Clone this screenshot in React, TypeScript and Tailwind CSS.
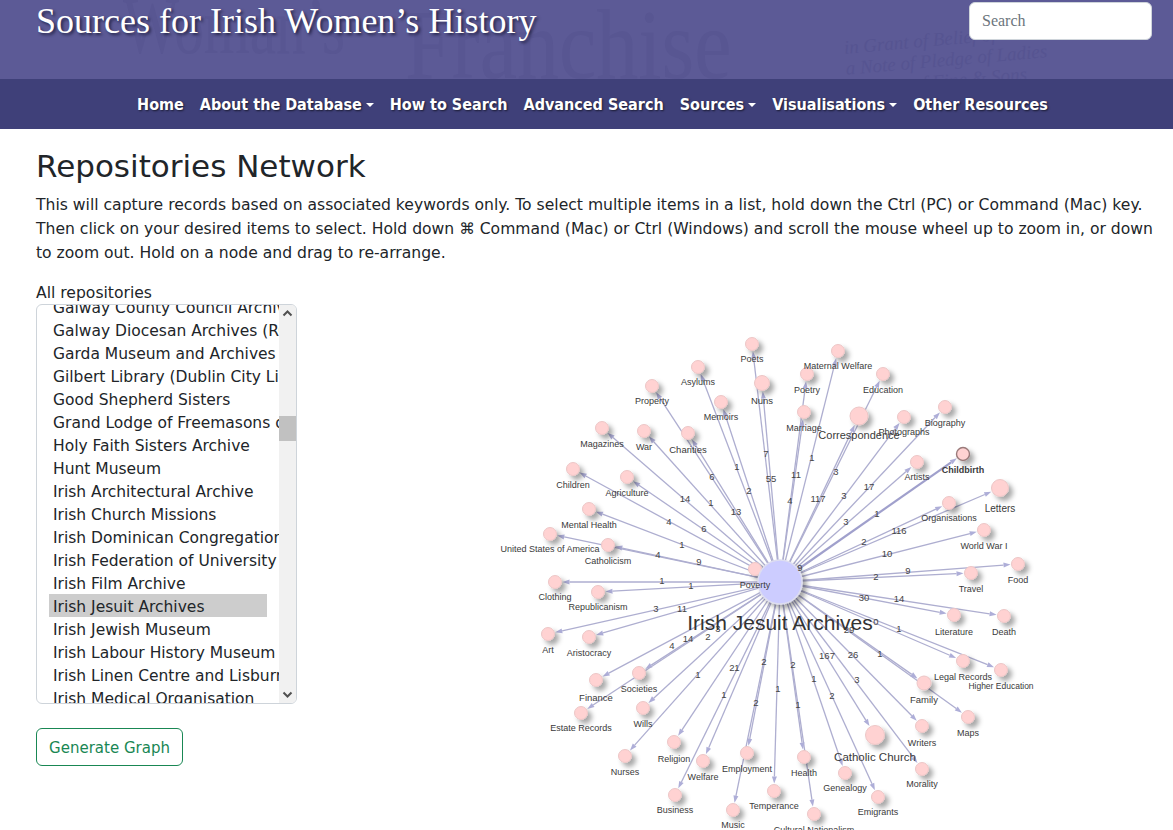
import React from "react";

type N = [string, number, number, number, number?, number?];
// label, x, y, labelY, radius, label font size
const nodes: N[] = [
  ["Poets", 752, 344, 359], ["Asylums", 698, 367, 382], ["Property", 652, 386, 401], ["Nuns", 762, 383, 400, 7.5, 9.5],
  ["Memoirs", 721, 402, 417], ["Magazines", 602, 428, 444], ["War", 644, 431, 447], ["Charities", 688, 433, 449, 6.5, 9.5],
  ["Children", 573, 469, 485], ["Agriculture", 627, 477, 493], ["Mental Health", 589, 509, 525], ["United States of America", 550, 534, 549],
  ["Catholicism", 608, 545, 561], ["Poverty", 755, 569, 585], ["Clothing", 555, 582, 597], ["Republicanism", 598, 592, 607],
  ["Art", 548, 634, 650], ["Aristocracy", 589, 637, 653], ["Finance", 596, 680, 697, 6.5, 9.5], ["Societies", 639, 673, 689],
  ["Estate Records", 581, 713, 728], ["Wills", 643, 708, 724], ["Nurses", 625, 756, 772], ["Religion", 674, 742, 759],
  ["Welfare", 703, 761, 777], ["Business", 675, 795, 810], ["Employment", 747, 753, 769], ["Music", 733, 810, 825],
  ["Temperance", 774, 791, 806], ["Cultural Nationalism", 814, 814, 830], ["Health", 804, 757, 773], ["Genealogy", 845, 773, 788],
  ["Emigrants", 878, 797, 812], ["Catholic Church", 875, 735, 757, 9.5, 11.5], ["Morality", 922, 769, 784], ["Writers", 922, 726, 743],
  ["Maps", 968, 717, 733], ["Family", 924, 683, 699, 7, 9.5], ["Legal Records", 963, 661, 677], ["Higher Education", 1001, 670, 686, 6.5, 8.5],
  ["Literature", 954, 615, 632], ["Death", 1004, 616, 632], ["Maternal Welfare", 838, 351, 366], ["Poetry", 807, 374, 390],
  ["Education", 883, 374, 390], ["Marriage", 804, 412, 428], ["Correspondence", 859, 416, 435, 9, 11], ["Photographs", 904, 417, 432],
  ["Biography", 945, 407, 423], ["Artists", 917, 462, 477], ["Childbirth", 963, 454, 470], ["Organisations", 949, 503, 518],
  ["Letters", 1000, 488, 508, 8.5, 10], ["World War I", 984, 530, 546], ["Food", 1018, 564, 580], ["Travel", 971, 573, 589],
];

const edgeLabels: [string, number, number][] = [
  ["7", 766, 454], ["55", 771, 479], ["2", 749, 491], ["1", 737, 467], ["6", 712, 477], ["1", 711, 503], ["13", 736, 512], ["14", 685, 499],
  ["4", 669, 522], ["6", 704, 529], ["1", 682, 545], ["4", 658, 555], ["9", 699, 562], ["1", 662, 581], ["1", 691, 586],
  ["11", 796, 475], ["4", 790, 501], ["1", 812, 458], ["3", 836, 472], ["117", 818, 499], ["3", 844, 496], ["17", 869, 487], ["3", 846, 522],
  ["1", 877, 514], ["2", 864, 542], ["116", 899, 531], ["10", 887, 554], ["9", 800, 568], ["9", 908, 571], ["2", 876, 577],
  ["3", 656, 609], ["11", 682, 609], ["4", 672, 646], ["14", 688, 639], ["3", 718, 629], ["2", 708, 637], ["1", 698, 675], ["2", 732, 668],
  ["1", 737, 668], ["1", 724, 695], ["2", 764, 662], ["2", 756, 703], ["1", 778, 689], ["2", 793, 665], ["1", 798, 705], ["1", 814, 679],
  ["167", 827, 656], ["2", 832, 696], ["26", 853, 655], ["3", 857, 680], ["29", 849, 630], ["0", 876, 622], ["1", 880, 654], ["1", 899, 629],
  ["30", 864, 598], ["14", 899, 599],
];

const repos = [
  "Galway County Council Archives", "Galway Diocesan Archives (RC)", "Garda Museum and Archives", "Gilbert Library (Dublin City Library)",
  "Good Shepherd Sisters", "Grand Lodge of Freemasons of Ireland", "Holy Faith Sisters Archive", "Hunt Museum", "Irish Architectural Archive",
  "Irish Church Missions", "Irish Dominican Congregation", "Irish Federation of University Women", "Irish Film Archive", "Irish Jesuit Archives",
  "Irish Jewish Museum", "Irish Labour History Museum", "Irish Linen Centre and Lisburn Museum", "Irish Medical Organisation",
];

const CX = 780, CY = 582;

function Graph() {
  return (
    <svg viewBox="490 335 560 500" width={560} height={500} className="block shrink-0 overflow-visible" style={{ fontFamily: '"Liberation Sans", Arial, sans-serif' }}>
      <defs>
        <filter id="ns" x="-100%" y="-100%" width="320%" height="320%">
          <feDropShadow dx="4" dy="4" stdDeviation="2.6" floodColor="#000" floodOpacity="0.34" />
        </filter>
      </defs>
      {nodes.map(([name, x, y, , r = 6.5]) => {
        const dx = x - CX, dy = y - CY, d = Math.hypot(dx, dy);
        const ux = dx / d, uy = dy / d;
        const tx = x - ux * (r + 1), ty = y - uy * (r + 1);
        const bx = tx - ux * 7, by = ty - uy * 7;
        const px = -uy * 2.5, py = ux * 2.5;
        const thick = name === "Childbirth";
        return (
          <g key={name}>
            <line x1={CX} y1={CY} x2={bx} y2={by} stroke={thick ? "#a0a0cc" : "#aeaed0"} strokeWidth={thick ? 2.2 : 1.3} />
            <polygon points={`${tx},${ty} ${bx + px},${by + py} ${bx - px},${by - py}`} fill="#aeaed8" />
          </g>
        );
      })}
      {nodes.map(([name, x, y, , r = 6.5]) => (
        <circle key={name} cx={x} cy={y} r={r} fill="#ffd2d2" stroke={name === "Childbirth" ? "#9a7a7a" : "#ecc6c6"} strokeWidth={name === "Childbirth" ? 1.4 : 1} filter="url(#ns)" />
      ))}
      <circle cx={CX} cy={CY} r={22} fill="#ccccff" stroke="#ddddf0" strokeWidth={1.5} filter="url(#ns)" />
      {edgeLabels.map(([t, x, y], i) => (
        <text key={i} x={x} y={y} textAnchor="middle" dominantBaseline="middle" fontSize={9.5} fill="#444">{t}</text>
      ))}
      {nodes.map(([name, x, , ly, , fs = 9]) => (
        <text key={name} x={x} y={ly + 1} textAnchor="middle" dominantBaseline="middle" fontSize={fs} fill="#3a3a3a" fontWeight={name === "Childbirth" ? 700 : 400}>{name}</text>
      ))}
      <text x={780} y={624} textAnchor="middle" dominantBaseline="middle" fontSize={21} fill="#333">Irish Jesuit Archives</text>
    </svg>
  );
}

function Caret() {
  return <span className="ml-[4px] inline-block w-0 h-0 align-[3px] border-x-[4px] border-x-transparent border-t-[4px] border-t-white" />;
}

function NavItem({ label, caret }: { label: string; caret?: boolean }) {
  return (
    <a className="px-2 whitespace-nowrap text-white font-bold text-[16px] [font-family:'DejaVu_Sans_Condensed','DejaVu_Sans',sans-serif] [text-shadow:1px_1px_2px_rgba(0,0,0,0.6)]">
      {label}
      {caret && <Caret />}
    </a>
  );
}

export default function App() {
  return (
    <div className="h-[830px] w-[1173px] overflow-hidden bg-white text-[#212529] [font-family:'DejaVu_Sans',sans-serif]">
      <header className="relative h-[79px] overflow-hidden bg-[#5c5a96] pl-9 pr-[21px] flex items-start justify-between">
        <div aria-hidden className="absolute left-[123px] top-[-14px] text-[80px] leading-none whitespace-nowrap text-[#585692] [font-family:'Liberation_Serif',serif] origin-top-left scale-x-[0.74]">
          Woman’s
        </div>
        <div aria-hidden className="absolute left-[405px] top-[-5px] text-[100px] leading-none whitespace-nowrap text-[#585692] [font-family:'Liberation_Serif',serif] origin-top-left scale-x-[0.84]">
          Franchise
        </div>
        <div aria-hidden className="absolute left-[845px] top-[22px] w-[340px] text-[19px] leading-[21px] italic whitespace-nowrap text-[#565491] [font-family:'Liberation_Serif',serif] -rotate-[5deg]">
          in Grant of Belief of Doctors
          <br />
          a Note of Pledge of Ladies
          <br />
          the Vote of Fine &amp; Sons
        </div>
        <h2 className="relative text-[36px] leading-[42px] text-white [font-family:'Liberation_Serif',serif] [text-shadow:2px_2px_3px_rgba(20,20,50,0.75)]">
          Sources for Irish Women’s History
        </h2>
        <div className="relative mt-[2px] w-[183px] h-[38px] rounded-md bg-white border border-[#ced4da] pl-[12px] flex items-center text-[16px] text-[#6c757d] [font-family:'Liberation_Serif',serif]">
          Search
        </div>
      </header>
      <nav className="h-[50px] pt-[2px] pl-[12px] bg-[#3f4079] flex items-center justify-center">
        <NavItem label="Home" />
        <NavItem label="About the Database" caret />
        <NavItem label="How to Search" />
        <NavItem label="Advanced Search" />
        <NavItem label="Sources" caret />
        <NavItem label="Visualisations" caret />
        <NavItem label="Other Resources" />
      </nav>
      <main className="px-9">
        <h1 className="mt-[18px] text-[31px] leading-[38px] font-normal">Repositories Network</h1>
        <p className="mt-[8px] w-[1125px] text-[15.6px] leading-6">
          This will capture records based on associated keywords only. To select multiple items in a list, hold down the Ctrl (PC) or Command (Mac) key. Then click on your desired items to select. Hold down ⌘ Command (Mac) or Ctrl (Windows) and scroll the mouse wheel up to zoom in, or down to zoom out. Hold on a node and drag to re-arrange.
        </p>
        <div className="mt-[16px] flex items-start">
          <div className="w-[261px] shrink-0">
            <div className="h-[23px] pt-[1px] text-[15.6px] leading-[23px]">All repositories</div>
            <div className="h-[400px] rounded-md border border-[#ced4da] flex overflow-hidden">
              <div className="flex-1 min-w-0 overflow-hidden">
                <div className="-mt-[10px] pl-3">
                  {repos.map((r) => (
                    <div key={r} className={`w-[218px] h-[23px] leading-[27px] pl-[4px] whitespace-nowrap text-[15.5px] ${r === "Irish Jesuit Archives" ? "bg-[#cdcdcd]" : ""}`}>
                      {r}
                    </div>
                  ))}
                </div>
              </div>
              <div className="w-[17px] shrink-0 bg-[#f1f1f1] flex flex-col items-center justify-between relative">
                <svg width="17" height="17" viewBox="0 0 17 17" className="shrink-0"><path d="M4.5 10.5 8.5 6.5 12.5 10.5" fill="none" stroke="#505050" strokeWidth="2" /></svg>
                <div className="absolute left-0 top-[111px] w-[17px] h-[25px] bg-[#c1c1c1]" />
                <svg width="17" height="17" viewBox="0 0 17 17" className="shrink-0"><path d="M4.5 6.5 8.5 10.5 12.5 6.5" fill="none" stroke="#505050" strokeWidth="2" /></svg>
              </div>
            </div>
            <button className="mt-[24px] h-[38px] w-[147px] pt-[2px] rounded-md border border-[#198754] text-[#198754] text-[15px] bg-white">Generate Graph</button>
          </div>
          <div className="ml-[193px] mt-[54px]">
            <Graph />
          </div>
        </div>
      </main>
    </div>
  );
}
